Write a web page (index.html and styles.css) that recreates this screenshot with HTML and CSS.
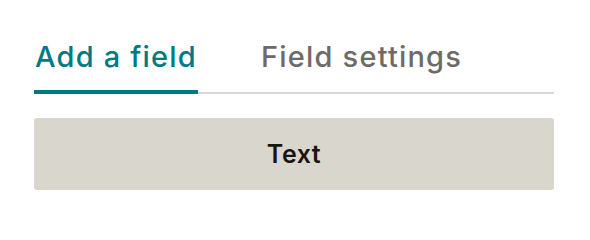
FILE: index.html
```html
<!DOCTYPE html>
<html>
<head>
<meta charset="utf-8">
<link rel="stylesheet" href="styles.css">
</head>
<body>
<div class="panel">
  <div class="tabs">
    <div class="tab active">Add a field</div>
    <div class="tab">Field settings</div>
  </div>
  <div class="fields">
    <button class="field-btn">Text</button>
  </div>
</div>
</body>
</html>
```
FILE: styles.css
```css
html, body {
  margin: 0;
  padding: 0;
  background: #ffffff;
}
body {
  font-family: Inter, "Liberation Sans", sans-serif;
}
.panel {
  width: 520px;
  padding: 40px 0 0 34px;
}
.tabs {
  display: flex;
  gap: 62px;
  border-bottom: 2px solid #d9d9d9;
  height: 54px;
  box-sizing: border-box;
}
.tab {
  font-size: 29px;
  font-weight: 500;
  letter-spacing: 1.2px;
  color: #6f6a66;
  line-height: 33px;
  padding-left: 1px;
  padding-right: 1px;
  margin-bottom: -2px;
  border-bottom: 4px solid transparent;
}
.tab.active {
  color: #007a82;
  border-bottom-color: #007a82;
}
.fields {
  margin-top: 24px;
}
.field-btn {
  display: flex;
  align-items: center;
  justify-content: center;
  width: 520px;
  height: 72px;
  background: #d9d6cd;
  border: none;
  border-radius: 3px;
  font-family: Inter, "Liberation Sans", sans-serif;
  font-size: 25px;
  font-weight: 600;
  letter-spacing: 0.5px;
  color: #1c1410;
  padding: 0;
}
```
